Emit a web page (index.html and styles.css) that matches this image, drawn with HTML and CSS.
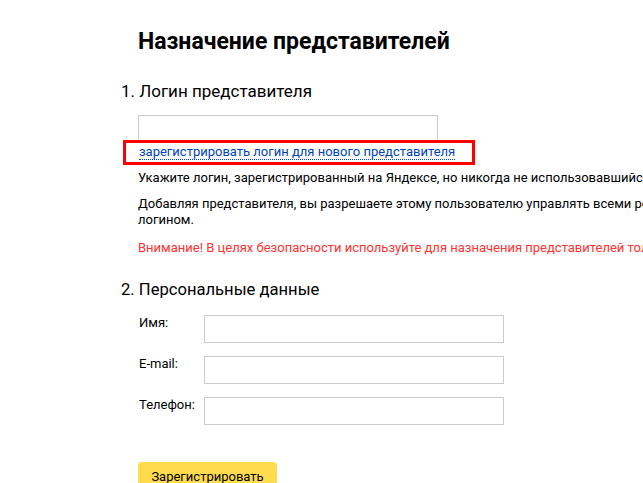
FILE: index.html
```html
<!DOCTYPE html>
<html lang="ru">
<head>
<meta charset="utf-8">
<link rel="stylesheet" href="styles.css">
</head>
<body>
<div class="page">
  <h1 class="title">Назначение представителей</h1>
  <h2 class="step">1. Логин представителя</h2>
  <div class="step-body">
    <div class="login-wrap">
      <input class="field login" type="text">
      <div class="link-row">
        <a class="reg-link" href="#">зарегистрировать логин для нового представителя</a>
      </div>
      <div class="highlight"></div>
    </div>
    <p class="note">Укажите логин, зарегистрированный на Яндексе, но никогда не использовавшийся для работы с Директом.</p>
    <p class="note">Добавляя представителя, вы разрешаете этому пользователю управлять всеми рекламными кампаниями, созданными под вашим<br>логином.</p>
    <p class="note warn">Внимание! В целях безопасности используйте для назначения представителей только логины, которыми вы владеете.</p>
  </div>
  <h2 class="step step2">2. Персональные данные</h2>
  <div class="step-body">
    <div class="form-row"><label class="lbl">Имя:</label><input class="field" type="text"></div>
    <div class="form-row"><label class="lbl">E-mail:</label><input class="field" type="text"></div>
    <div class="form-row"><label class="lbl">Телефон:</label><input class="field" type="text"></div>
    <button class="btn">Зарегистрировать</button>
  </div>
</div>
</body>
</html>
```
FILE: styles.css
```css
html, body {
  margin: 0;
  padding: 0;
  background: #fff;
  overflow: hidden;
}
body {
  font-family: Roboto, "Noto Sans", sans-serif;
  color: #000;
  font-size: 13px;
}
.page {
  padding: 26px 0 0 121px;
  width: 1200px;
}
.title {
  margin: 0 0 0 17px;
  font-size: 23px;
  font-weight: bold;
  line-height: 32px;
}
.step {
  margin: 22px 0 0 0;
  font-size: 17px;
  font-weight: normal;
  line-height: 22px;
}
.step2 {
  margin-top: 23px;
  font-size: 16.6px;
}
.step-body {
  padding-left: 17px;
}
.login-wrap {
  position: relative;
  margin-top: 13px;
}
.field {
  display: block;
  box-sizing: border-box;
  width: 300px;
  height: 28px;
  border: 1px solid #ccc;
  margin: 0;
  padding: 0;
  background: #fff;
}
.login {
  height: 27px;
}
.link-row {
  height: 24px;
  line-height: 20px;
}
.reg-link {
  color: #04b;
  text-decoration: none;
  border-bottom: 1px dotted #04b;
  margin-left: 1px;
}
.highlight {
  position: absolute;
  left: -15px;
  top: 25px;
  width: 346px;
  height: 19px;
  border: 3px solid #f00;
}
.note {
  margin: 4px 0 10px 0;
  line-height: 16px;
  white-space: nowrap;
}
.warn {
  color: #f33;
  margin-top: 12px;
}
.form-row {
  display: flex;
  align-items: flex-start;
  margin-top: 13px;
}
.form-row:first-child {
  margin-top: 14px;
}
.lbl {
  width: 65px;
  padding-top: 0;
  line-height: 16px;
  margin-left: 1px;
}
.btn {
  margin-top: 37px;
  width: 139px;
  height: 28px;
  border: 0;
  border-radius: 4px;
  background: #ffdb4d;
  font-family: inherit;
  font-size: 13px;
  color: #000;
  padding: 0;
}
```
